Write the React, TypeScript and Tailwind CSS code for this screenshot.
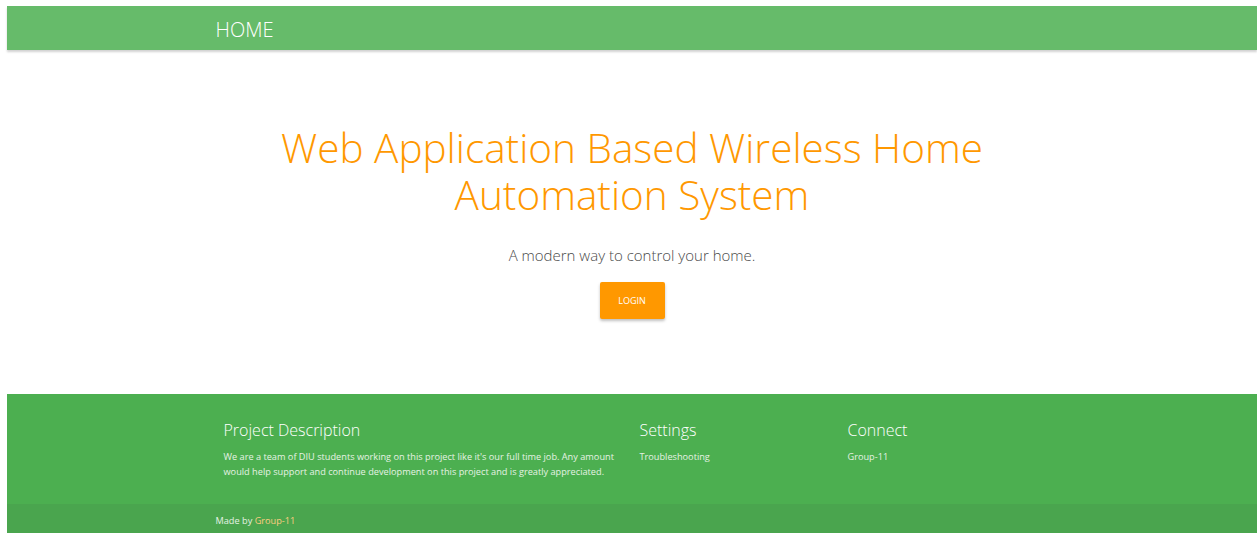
const font = { fontFamily: '"Open Sans", "Noto Sans", sans-serif' };

const App = () => {
  return (
    <div className="w-full min-h-screen bg-white pt-[6px] pl-[7px]" style={font}>
      <nav className="h-[44px] bg-[#66bb6a] shadow-[0_2px_2px_rgba(0,0,0,0.18)] flex items-center">
        <div className="w-[70%] mx-auto pl-[21px] pt-[5px]">
          <a href="#" className="text-white text-[20px] font-light leading-none">
            HOME
          </a>
        </div>
      </nav>

      <main className="h-[344px] flex flex-col items-center pt-[74px]">
        <h1 className="text-[#ff9800] text-[40.5px] font-light leading-[47px] text-center max-w-[720px]">
          Web Application Based Wireless Home Automation System
        </h1>
        <p className="mt-[30px] text-[#4a4a4a] text-[15px] font-light leading-none">
          A modern way to control your home.
        </p>
        <button className="mt-[19px] w-[65px] h-[37px] bg-[#ff9800] text-white text-[9px] rounded-[2px] shadow-[0_2px_3px_rgba(0,0,0,0.25)]">
          LOGIN
        </button>
      </main>

      <footer className="bg-[#4caf50]">
        <div className="w-[833px] mx-auto pl-[8px] pt-[28px] h-[110px] grid grid-cols-[416px_208px_208px]">
          <div className="pr-[8px]">
            <h5 className="text-white text-[16px] font-light leading-none">Project Description</h5>
            <p className="mt-[11px] text-[#e6f2e4] text-[9.2px] leading-[15px]">
              We are a team of DIU students working on this project like it's our full time job. Any amount
              would help support and continue development on this project and is greatly appreciated.
            </p>
          </div>
          <div>
            <h5 className="text-white text-[16px] font-light leading-none">Settings</h5>
            <ul className="mt-[11px] text-[#e6f2e4] text-[9.2px] leading-[15px]">
              <li>Troubleshooting</li>
            </ul>
          </div>
          <div>
            <h5 className="text-white text-[16px] font-light leading-none">Connect</h5>
            <ul className="mt-[11px] text-[#e6f2e4] text-[9.2px] leading-[15px]">
              <li>Group-11</li>
            </ul>
          </div>
        </div>
        <div className="bg-[#4aa54e] h-[32px] flex items-center">
          <div className="w-[70%] mx-auto pl-[21px] pt-[2px] text-[#e6f2e4] text-[9.2px]">
            Made by <span className="text-[#ffcc80]">Group-11</span>
          </div>
        </div>
      </footer>
    </div>
  );
};

export default App;
